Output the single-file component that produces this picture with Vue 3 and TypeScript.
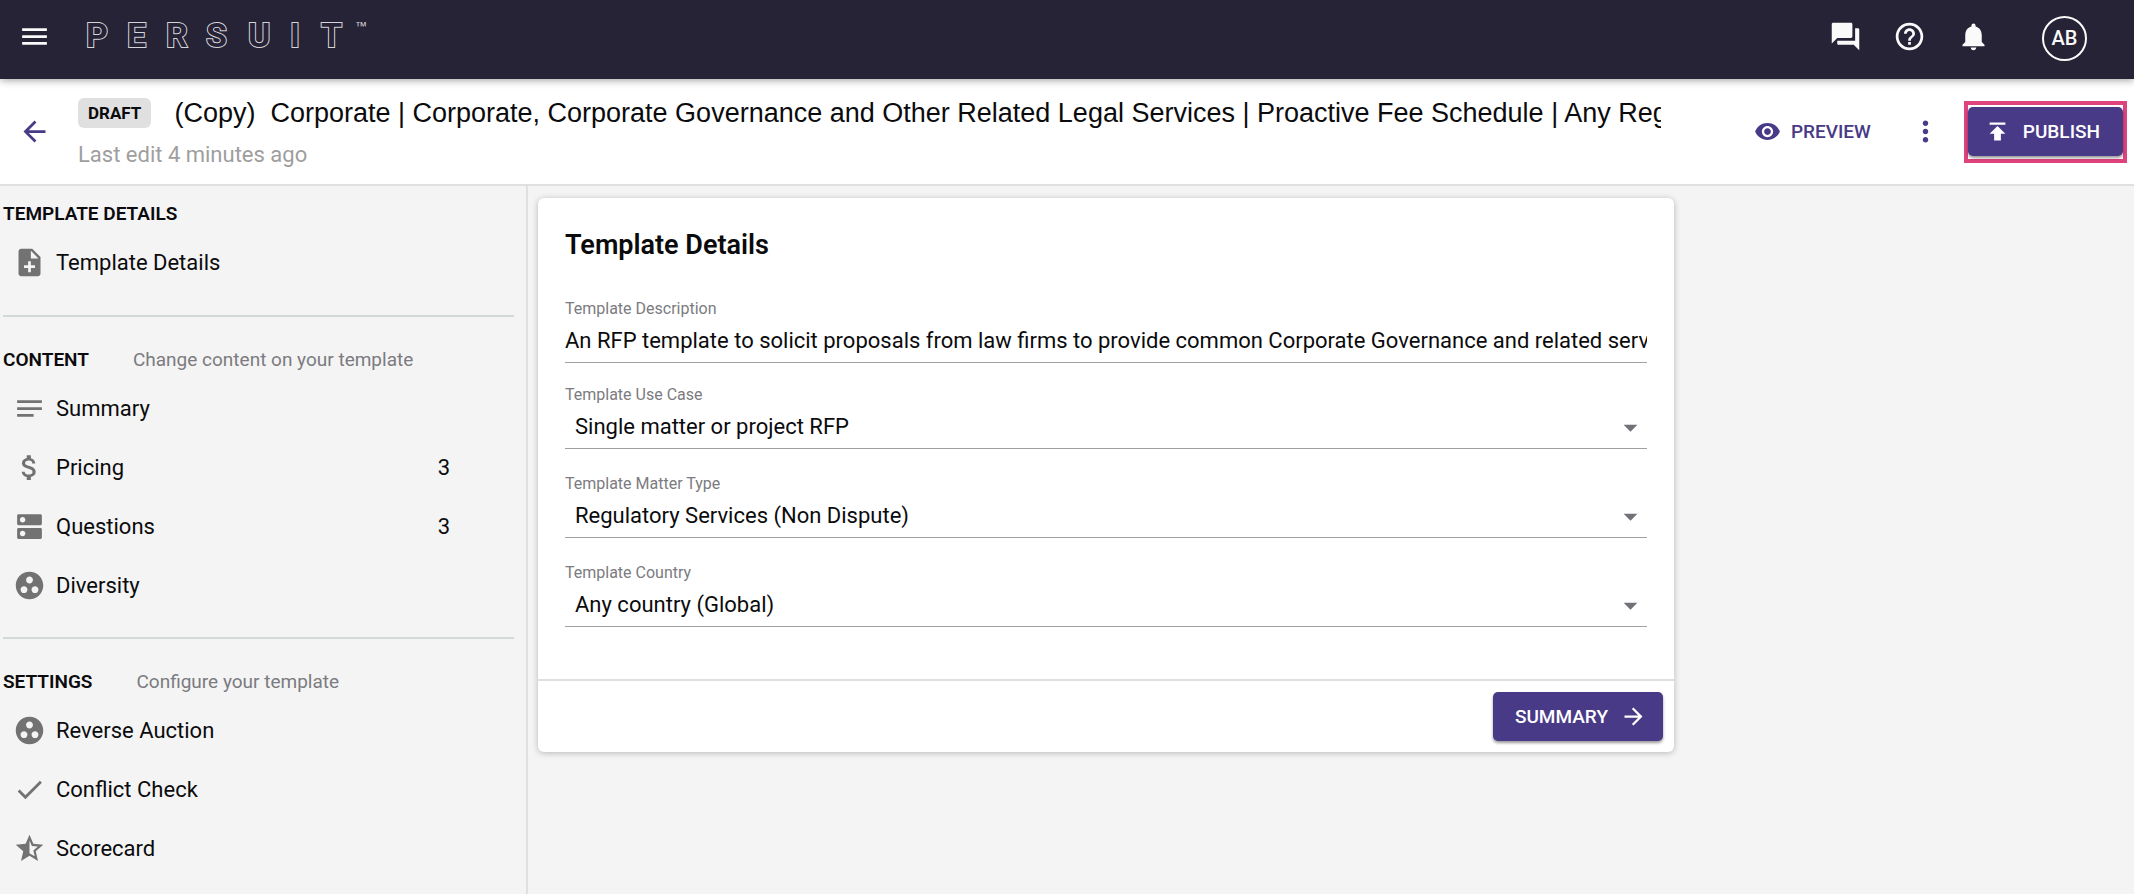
<script setup lang="ts">
import { ref } from 'vue'

interface NavItem {
  label: string
  icon: string
  count?: number
}

interface NavSection {
  title: string
  hint?: string
  items: NavItem[]
}

interface SelectField {
  id: string
  label: string
  value: string
}

const icons: Record<string, string> = {
  menu: 'M3 18h18v-2H3v2zm0-5h18v-2H3v2zm0-7v2h18V6H3z',
  chat: 'M21 6h-2v9H6v2c0 .55.45 1 1 1h11l4 4V7c0-.55-.45-1-1-1zm-4 6V3c0-.55-.45-1-1-1H3c-.55 0-1 .45-1 1v14l4-4h10c.55 0 1-.45 1-1z',
  help: 'M11 18h2v-2h-2v2zm1-16C6.48 2 2 6.48 2 12s4.48 10 10 10 10-4.480 10-10S17.520 2 12 2zm0 18c-4.410 0-8-3.590-8-8s3.590-8 8-8 8 3.590 8 8-3.590 8-8 8zm0-14c-2.210 0-4 1.790-4 4h2c0-1.100.9-2 2-2s2 .9 2 2c0 2-3 1.750-3 5h2c0-2.250 3-2.500 3-5 0-2.210-1.790-4-4-4z',
  bell: 'M12 22c1.100 0 2-.9 2-2h-4c0 1.100.89 2 2 2zm6-6v-5c0-3.070-1.640-5.640-4.500-6.320V4c0-.83-.67-1.500-1.500-1.500s-1.500.67-1.500 1.500v.68C7.630 5.360 6 7.920 6 11v5l-2 2v1h16v-1l-2-2z',
  back: 'M20 11H7.830l5.590-5.590L12 4l-8 8 8 8 1.410-1.410L7.830 13H20v-2z',
  forward: 'M12 4l-1.410 1.410L16.170 11H4v2h12.170l-5.580 5.590L12 20l8-8z',
  eye: 'M12 4.500C7 4.500 2.730 7.610 1 12c1.730 4.390 6 7.500 11 7.500s9.270-3.110 11-7.500c-1.730-4.390-6-7.500-11-7.500zM12 17c-2.760 0-5-2.240-5-5s2.240-5 5-5 5 2.240 5 5-2.240 5-5 5zm0-8c-1.660 0-3 1.340-3 3s1.340 3 3 3 3-1.340 3-3-1.340-3-3-3z',
  more: 'M12 8c1.100 0 2-.9 2-2s-.9-2-2-2-2 .9-2 2 .9 2 2 2zm0 2c-1.100 0-2 .9-2 2s.9 2 2 2 2-.9 2-2-.9-2-2-2zm0 6c-1.100 0-2 .9-2 2s.9 2 2 2 2-.9 2-2-.9-2-2-2z',
  publish: 'M5 4v2h14V4H5zm0 10h4v6h6v-6h4l-7-7-7 7z',
  note: 'M14 2H6c-1.100 0-1.990.9-1.990 2L4 20c0 1.100.89 2 1.990 2H18c1.100 0 2-.9 2-2V8l-6-6zm2 14h-3v3h-2v-3H8v-2h3v-3h2v3h3v2zm-3-7V3.500L18.500 9H13z',
  notes: 'M3 18h12v-2H3v2zM3 6v2h18V6H3zm0 7h18v-2H3v2z',
  dollar: 'M11.800 10.900c-2.270-.59-3-1.200-3-2.150 0-1.090 1.010-1.850 2.700-1.850 1.780 0 2.440.85 2.500 2.100h2.210c-.07-1.720-1.120-3.300-3.210-3.810V3h-3v2.160c-1.940.42-3.500 1.680-3.500 3.610 0 2.310 1.910 3.460 4.700 4.130 2.500.6 3 1.480 3 2.410 0 .69-.49 1.790-2.700 1.790-2.060 0-2.870-.92-2.980-2.100h-2.200c.12 2.190 1.760 3.420 3.680 3.830V21h3v-2.150c1.950-.37 3.500-1.500 3.500-3.550 0-2.840-2.430-3.810-4.700-4.400z',
  dns: 'M20 13H4c-.55 0-1 .45-1 1v6c0 .55.45 1 1 1h16c.55 0 1-.45 1-1v-6c0-.55-.45-1-1-1zM7 19c-1.100 0-2-.9-2-2s.9-2 2-2 2 .9 2 2-.9 2-2 2zM20 3H4c-.55 0-1 .45-1 1v6c0 .55.45 1 1 1h16c.55 0 1-.45 1-1V4c0-.55-.45-1-1-1zM7 9c-1.100 0-2-.9-2-2s.9-2 2-2 2 .9 2 2-.9 2-2 2z',
  group: 'M12 2C6.480 2 2 6.480 2 12s4.480 10 10 10 10-4.480 10-10S17.520 2 12 2zM8 17.500c-1.380 0-2.500-1.120-2.500-2.500s1.120-2.500 2.500-2.500 2.500 1.120 2.500 2.500-1.120 2.500-2.500 2.500zM9.500 8c0-1.380 1.120-2.500 2.500-2.500s2.500 1.120 2.500 2.500-1.120 2.500-2.500 2.500S9.500 9.380 9.500 8zm6.500 9.500c-1.380 0-2.500-1.120-2.500-2.500s1.120-2.500 2.500-2.500 2.500 1.120 2.500 2.500-1.120 2.500-2.500 2.500z',
  check: 'M9 16.170L4.830 12l-1.420 1.410L9 19 21 7l-1.410-1.410z',
  star: 'M22 9.240l-7.190-.62L12 2 9.190 8.630 2 9.240l5.460 4.730L5.820 21 12 17.270 18.180 21l-1.630-7.030L22 9.240zM12 15.400V6.100l1.710 4.040 4.380.38-3.320 2.880 1 4.280L12 15.400z',
  caret: 'M7 10l5 5 5-5z',
}

const sections: NavSection[] = [
  { title: 'TEMPLATE DETAILS', items: [{ label: 'Template Details', icon: 'note' }] },
  {
    title: 'CONTENT',
    hint: 'Change content on your template',
    items: [
      { label: 'Summary', icon: 'notes' },
      { label: 'Pricing', icon: 'dollar', count: 3 },
      { label: 'Questions', icon: 'dns', count: 3 },
      { label: 'Diversity', icon: 'group' },
    ],
  },
  {
    title: 'SETTINGS',
    hint: 'Configure your template',
    items: [
      { label: 'Reverse Auction', icon: 'group' },
      { label: 'Conflict Check', icon: 'check' },
      { label: 'Scorecard', icon: 'star' },
    ],
  },
]

const title =
  '(Copy)  Corporate | Corporate, Corporate Governance and Other Related Legal Services | Proactive Fee Schedule | Any Region'

const description = ref(
  'An RFP template to solicit proposals from law firms to provide common Corporate Governance and related services',
)

const fields = ref<SelectField[]>([
  { id: 'use-case', label: 'Template Use Case', value: 'Single matter or project RFP' },
  { id: 'matter-type', label: 'Template Matter Type', value: 'Regulatory Services (Non Dispute)' },
  { id: 'country', label: 'Template Country', value: 'Any country (Global)' },
])
</script>

<template>
  <div class="page">
    <header class="topbar">
      <button class="icon-button" type="button" aria-label="Menu">
        <svg class="icon" viewBox="0 0 24 24"><path :d="icons.menu" /></svg>
      </button>
      <a class="logo" href="#" aria-label="Persuit home">
        <svg width="290" height="40" viewBox="0 0 290 40">
          <text class="logo-word" x="1 42 81 121 163 205 236" y="30">PERSUIT</text>
          <text class="logo-mark" x="270" y="13">™</text>
        </svg>
      </a>
      <nav class="tools" aria-label="Account">
        <button class="icon-button" type="button" aria-label="Messages">
          <svg class="icon" viewBox="0 0 24 24"><path :d="icons.chat" /></svg>
        </button>
        <button class="icon-button" type="button" aria-label="Help">
          <svg class="icon" viewBox="0 0 24 24"><path :d="icons.help" /></svg>
        </button>
        <button class="icon-button" type="button" aria-label="Notifications">
          <svg class="icon" viewBox="0 0 24 24"><path :d="icons.bell" /></svg>
        </button>
      </nav>
      <button class="avatar" type="button">AB</button>
    </header>

    <div class="titlebar">
      <button class="icon-button accent" type="button" aria-label="Back">
        <svg class="icon" viewBox="0 0 24 24"><path :d="icons.back" /></svg>
      </button>
      <div class="heading">
        <div class="heading-row">
          <span class="badge">DRAFT</span>
          <h1>{{ title }}</h1>
        </div>
        <p class="edited">Last edit 4 minutes ago</p>
      </div>
      <div class="actions">
        <button class="preview" type="button">
          <svg class="small-icon" viewBox="0 0 24 24"><path :d="icons.eye" /></svg>
          PREVIEW
        </button>
        <button class="icon-button accent" type="button" aria-label="More options">
          <svg class="icon" viewBox="0 0 24 24"><path :d="icons.more" /></svg>
        </button>
        <div class="highlight">
          <button class="primary publish" type="button">
            <svg class="small-icon" viewBox="0 0 24 24"><path :d="icons.publish" /></svg>
            PUBLISH
          </button>
        </div>
      </div>
    </div>

    <div class="body">
      <aside class="sidebar">
        <section v-for="section in sections" :key="section.title" class="section">
          <div class="section-head">
            <h2>{{ section.title }}</h2>
            <span v-if="section.hint" class="hint">{{ section.hint }}</span>
          </div>
          <ul>
            <li v-for="item in section.items" :key="item.label">
              <a class="nav-item" href="#">
                <svg class="icon" viewBox="0 0 24 24"><path :d="icons[item.icon]" /></svg>
                <span class="nav-label">{{ item.label }}</span>
                <span v-if="item.count" class="count">{{ item.count }}</span>
              </a>
            </li>
          </ul>
        </section>
      </aside>

      <main class="content">
        <form class="card" @submit.prevent>
          <div class="card-body">
            <h2 class="card-title">Template Details</h2>
            <div class="field first">
              <label for="description">Template Description</label>
              <input id="description" v-model="description" type="text" />
            </div>
            <div v-for="field in fields" :key="field.id" class="field">
              <label :for="field.id">{{ field.label }}</label>
              <div class="select-wrap">
                <select :id="field.id" v-model="field.value">
                  <option :value="field.value">{{ field.value }}</option>
                </select>
                <svg class="icon caret" viewBox="0 0 24 24"><path :d="icons.caret" /></svg>
              </div>
            </div>
          </div>
          <div class="card-footer">
            <button class="primary next" type="submit">
              SUMMARY
              <svg class="small-icon" viewBox="0 0 24 24"><path :d="icons.forward" /></svg>
            </button>
          </div>
        </form>
      </main>
    </div>
  </div>
</template>

<style>
body {
  margin: 0;
  background: #f4f4f4;
}
</style>

<style scoped>
.page {
  display: flex;
  flex-direction: column;
  min-height: 100vh;
  background: #f4f4f4;
  color: #0b0b0d;
  font-family: Roboto, 'Liberation Sans', sans-serif;
  font-size: 22px;
}

.page *,
.page {
  box-sizing: border-box;
}

button,
input,
select {
  margin: 0;
  padding: 0;
  border: 0;
  background: none;
  color: inherit;
  font: inherit;
}

button {
  cursor: pointer;
}

h1,
h2,
p,
ul {
  margin: 0;
  padding: 0;
  list-style: none;
}

a {
  color: inherit;
  text-decoration: none;
}

.icon {
  display: block;
  flex: none;
  width: 33px;
  height: 33px;
  fill: currentColor;
}

.small-icon {
  display: block;
  flex: none;
  width: 27px;
  height: 27px;
  fill: currentColor;
}

.icon-button {
  display: flex;
  flex: none;
}

.accent {
  color: #483a87;
}

.topbar {
  position: relative;
  display: flex;
  align-items: center;
  height: 79px;
  padding: 0 47px 6px 18px;
  background: #262337;
  color: #fafafa;
  box-shadow: 0 1px 8px rgba(0, 0, 0, 0.4);
}

.logo {
  margin-left: 34px;
}

.logo svg {
  display: block;
}

.logo-word {
  fill: #262337;
  stroke: #d6d5da;
  stroke-width: 2px;
  paint-order: stroke;
  font-size: 34px;
  font-weight: 700;
}

.logo-mark {
  fill: #d6d5da;
  font-family: 'Liberation Sans', Arial, sans-serif;
  font-size: 12px;
}

.tools {
  display: flex;
  gap: 31px;
  margin-left: auto;
}

.avatar {
  width: 45px;
  height: 45px;
  margin: 4px 0 0 52px;
  border: 2px solid #fafafa;
  border-radius: 50%;
  font-size: 20px;
  font-weight: 500;
  line-height: 41px;
}

.titlebar {
  display: flex;
  align-items: center;
  height: 107px;
  padding: 0 7px 0 18px;
  border-bottom: 2px solid #e0e0e0;
  background: #fff;
}

.heading {
  flex: 1;
  min-width: 0;
  margin: 0 93px 0 27px;
}

.heading-row {
  display: flex;
  align-items: center;
  gap: 23px;
}

.badge {
  padding: 0 10px;
  border-radius: 6px;
  background: #e0e0e0;
  font-size: 17px;
  font-weight: 700;
  line-height: 30px;
}

h1 {
  flex: 1;
  overflow: hidden;
  font-family: 'Liberation Sans', Arial, sans-serif;
  font-size: 27px;
  font-weight: 400;
  line-height: 36px;
  white-space: pre;
}

.edited {
  margin-top: 10px;
  color: #9e9e9e;
  line-height: 28px;
}

.actions {
  display: flex;
  align-items: center;
}

.preview {
  display: flex;
  align-items: center;
  gap: 10px;
  margin-right: 38px;
  color: #483a87;
  font-size: 19px;
  font-weight: 500;
}

.highlight {
  margin-left: 22px;
  padding: 2px 0 3px;
  border: 4px solid #de437e;
}

.primary {
  display: flex;
  align-items: center;
  height: 49px;
  border-radius: 5px;
  background: #483a87;
  color: #fff;
  font-size: 19px;
  font-weight: 500;
  box-shadow: 0 2px 3px rgba(0, 0, 0, 0.4);
}

.publish {
  gap: 12px;
  padding: 0 23px 0 16px;
}

.next {
  gap: 12px;
  padding: 0 16px 0 22px;
}

.body {
  display: flex;
  flex: 1;
}

.sidebar {
  flex: none;
  width: 528px;
  padding: 0 12px 0 3px;
  border-right: 2px solid #e0e0e0;
}

.section {
  padding: 31px 0 22px;
  border-bottom: 2px solid #d3d8d8;
}

.section:first-child {
  padding: 16px 0 23px;
}

.section:last-child {
  border-bottom: 0;
  padding-bottom: 0;
}

.section-head {
  display: flex;
  align-items: center;
  gap: 44px;
  margin-bottom: 7px;
  line-height: 24px;
}

.section-head h2 {
  font-size: 19px;
  font-weight: 600;
}

.hint {
  color: #7b7b80;
  font-size: 19px;
}

.nav-item {
  display: flex;
  align-items: center;
  height: 59px;
  padding: 0 64px 0 10px;
}

.nav-item .icon {
  color: #727272;
}

.nav-label {
  flex: 1;
  margin-left: 10px;
}

.content {
  flex: 1;
  min-width: 0;
  padding: 12px 10px;
}

.card {
  max-width: 1136px;
  border-radius: 6px;
  background: #fff;
  box-shadow: 0 1px 6px rgba(0, 0, 0, 0.25);
}

.card-body {
  padding: 29px 27px 52px;
}

.card-title {
  font-size: 27px;
  font-weight: 600;
  line-height: 36px;
}

.field {
  display: flex;
  flex-direction: column;
  margin-top: 25px;
}

.first {
  margin-top: 36px;
}

.field:nth-child(3) {
  margin-top: 22px;
}

label {
  color: #7b7b80;
  font-size: 16px;
  line-height: 20px;
}

input,
select {
  display: block;
  width: 100%;
  height: 44px;
  border-bottom: 1px solid #a0a0a0;
  border-radius: 0;
  outline: 0;
  appearance: none;
}

select {
  padding-left: 10px;
}

.select-wrap {
  position: relative;
}

.caret {
  position: absolute;
  top: 6px;
  right: 0;
  color: #717177;
  pointer-events: none;
}

.card-footer {
  display: flex;
  justify-content: flex-end;
  padding: 11px;
  border-top: 2px solid #e0e0e0;
}
</style>
